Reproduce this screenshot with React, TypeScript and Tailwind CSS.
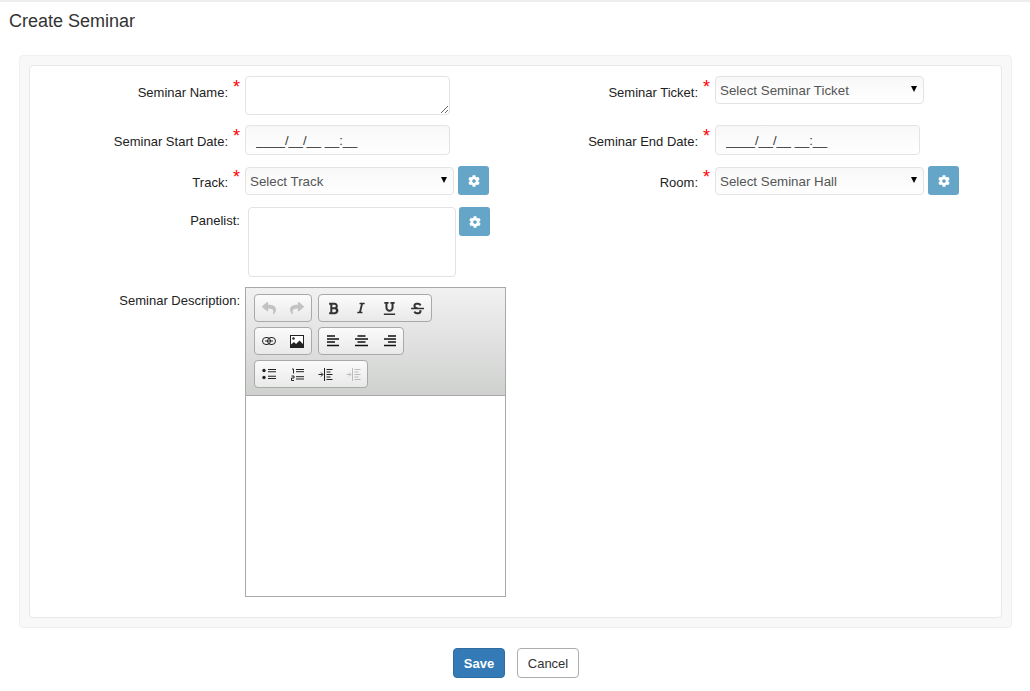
import type { ReactNode } from 'react';
import {
  FaBold,
  FaCog,
  FaItalic,
  FaReply,
  FaShare,
  FaStrikethrough,
  FaUnderline,
} from 'react-icons/fa';

const inputClass =
  'h-full rounded-[4px] border border-[#e3e3e3] bg-gradient-to-b from-[#f8f8f8] to-white text-[#333] outline-none';

function Label({ text }: { text: string }) {
  return (
    <>
      <label className="w-[198px] shrink-0 pt-[8px] text-right text-[13px] leading-[18px] text-[#222]">{text}</label>
      <span className="ml-[5px] mt-[1px] w-[12px] shrink-0 self-start text-[18px] leading-[20px] text-[#f00]">*</span>
    </>
  );
}

function GearButton() {
  return (
    <button className="flex h-[29px] w-[31px] shrink-0 items-center justify-center rounded-[3px] bg-[#65a6c8] text-white">
      <FaCog size={12} />
    </button>
  );
}

function SelectBox({ placeholder }: { placeholder: string }) {
  return (
    <div className="relative mt-px h-[28px] w-[209px]">
      <select className={`${inputClass} w-full appearance-none pl-[4px] pt-px text-[13.33px] text-[#555]`}>
        <option>{placeholder}</option>
      </select>
      <span className="absolute right-[7px] top-[10px] h-0 w-0 border-x-[3px] border-t-[6px] border-x-transparent border-t-black" />
    </div>
  );
}

function MaskInput() {
  return <input readOnly value="____/__/__ __:__" className={`${inputClass} w-[205px] pl-[10px] text-[13px]`} />;
}

function Group({ children }: { children: ReactNode }) {
  return <div className="flex rounded-[4px] border border-[#a9a9a9] bg-gradient-to-b from-[#fbfbfb] to-[#e9e9e9]">{children}</div>;
}

function Tool({ children, muted }: { children: ReactNode; muted?: boolean }) {
  return (
    <span className={`flex h-[26px] w-[28px] items-center justify-center ${muted ? 'text-[#c2c2c2]' : 'text-[#333]'}`}>
      {children}
    </span>
  );
}

// sprite-style glyphs from the editor toolbar
function AlignIcon({ d }: { d: string }) {
  return (
    <svg width="13" height="12" viewBox="0 0 13 12" fill="none" stroke="#111" strokeWidth="1.5">
      <path d={d} />
    </svg>
  );
}

function LinkIcon() {
  return (
    <svg width="14" height="8" viewBox="0 0 14 8" fill="none" stroke="#222" strokeWidth="1">
      <rect x="0.5" y="0.5" width="8" height="7" rx="3.5" />
      <rect x="5.5" y="0.5" width="8" height="7" rx="3.5" />
      <path d="M3 4h8" />
    </svg>
  );
}

function ImageIcon() {
  return (
    <svg width="14" height="13" viewBox="0 0 14 13">
      <rect x="0.5" y="0.5" width="13" height="12" fill="#fff" stroke="#222" />
      <circle cx="3.5" cy="3.5" r="1.2" fill="#222" />
      <path d="M1 12V9.5l3-2.5 2 2 3.5-3.5L13 9v3z" fill="#222" />
    </svg>
  );
}

function ListUl() {
  return (
    <svg width="14" height="12" viewBox="0 0 14 12" stroke="#222" strokeWidth="1.1" fill="#222">
      <circle cx="2" cy="2.5" r="1.7" stroke="none" />
      <circle cx="2" cy="9.5" r="1.7" stroke="none" />
      <path d="M6 1.5h8M6 3.7h8M6 8.3h8M6 10.5h8" fill="none" />
    </svg>
  );
}

function ListOl() {
  return (
    <svg width="13" height="13" viewBox="0 0 13 13" stroke="#222" strokeWidth="1" fill="none">
      <path d="M1 1h1.5v4.5M.5 8h2.5v2H.5v2.5H3" />
      <path d="M5 1.5h8M5 3.7h8M5 8.7h8M5 11h8" />
    </svg>
  );
}

function Indent({ muted }: { muted?: boolean }) {
  return (
    <svg width="15" height="13" viewBox="0 0 15 13" fill="none" stroke={muted ? '#bbb' : '#222'} strokeWidth="1">
      <path d="M6.5 0v13M8.5 1.5h6M8.5 4h4M8.5 6.5h6M8.5 9h4M8.5 11.5h6M.5 6.5h4M3 4.5l2 2-2 2" />
    </svg>
  );
}

export default function App() {
  return (
    <div className="min-h-[691px] border-t-2 border-[#eeeeee] bg-white font-['Liberation_Sans',Arial,sans-serif]">
      <h1 className="pl-[9px] pt-[9px] text-[18px] leading-[20px] text-[#333]">Create Seminar</h1>

      <div className="ml-[19px] mr-[18px] mt-[24px] rounded-[4px] border border-[#f0f0f0] bg-[#f8f8f8] p-[9px]">
        <div className="flex rounded-[4px] border border-[#e8e8e8] bg-white pb-[20px] pt-[10px]">
          {/* Left column */}
          <div className="w-[470px] shrink-0">
            <div className="flex h-[39px]">
              <Label text="Seminar Name:" />
              <textarea className="h-full w-[205px] rounded-[4px] border border-[#e3e3e3] bg-white outline-none" />
            </div>
            <div className="mt-[10px] flex h-[30px]">
              <Label text="Seminar Start Date:" />
              <MaskInput />
            </div>
            <div className="mt-[11px] flex h-[29px]">
              <Label text="Track:" />
              <SelectBox placeholder="Select Track" />
              <div className="ml-[4px]">
                <GearButton />
              </div>
            </div>
            <div className="mt-[12px] flex h-[70px]">
              <label className="w-[210px] shrink-0 pt-[5px] text-right text-[13px] leading-[18px] text-[#222]">Panelist:</label>
              <div className="ml-[8px] h-full w-[208px] rounded-[4px] border border-[#e3e3e3] bg-white" />
              <div className="ml-[3px]">
                <GearButton />
              </div>
            </div>
            <div className="mt-[10px] flex">
              <label className="w-[210px] shrink-0 pt-[5px] text-right text-[13px] leading-[18px] text-[#222]">Seminar Description:</label>
              <div className="ml-[5px] h-[310px] w-[261px] shrink-0 border border-[#a9a9a9] bg-white">
                <div className="flex h-[108px] flex-col gap-[5px] border-b border-[#a9a9a9] bg-gradient-to-b from-[#f1f1f1] to-[#cfd1cf] pl-[8px] pt-[6px]">
                  <div className="flex gap-[6px]">
                    <Group>
                      <Tool muted><FaReply size={14} /></Tool>
                      <Tool muted><FaShare size={14} /></Tool>
                    </Group>
                    <Group>
                      <Tool><FaBold size={13} /></Tool>
                      <Tool><FaItalic size={12} /></Tool>
                      <Tool><FaUnderline size={13} /></Tool>
                      <Tool><FaStrikethrough size={13} /></Tool>
                    </Group>
                  </div>
                  <div className="flex gap-[6px]">
                    <Group>
                      <Tool><LinkIcon /></Tool>
                      <Tool><ImageIcon /></Tool>
                    </Group>
                    <Group>
                      <Tool><AlignIcon d="M0 1h8M0 4h12M0 7h8M0 10.5h12" /></Tool>
                      <Tool><AlignIcon d="M2.5 1h8M0 4h13M2.5 7h8M0 10.5h13" /></Tool>
                      <Tool><AlignIcon d="M5 1h8M1 4h12M5 7h8M1 10.5h12" /></Tool>
                    </Group>
                  </div>
                  <div className="flex">
                    <Group>
                      <Tool><ListUl /></Tool>
                      <Tool><ListOl /></Tool>
                      <Tool><Indent /></Tool>
                      <Tool muted><Indent muted /></Tool>
                    </Group>
                  </div>
                </div>
              </div>
            </div>
          </div>

          {/* Right column */}
          <div className="w-[470px] shrink-0">
            <div className="flex h-[39px]">
              <Label text="Seminar Ticket:" />
              <div className="-mt-px">
                <SelectBox placeholder="Select Seminar Ticket" />
              </div>
            </div>
            <div className="mt-[10px] flex h-[30px]">
              <Label text="Seminar End Date:" />
              <MaskInput />
            </div>
            <div className="mt-[11px] flex h-[29px]">
              <Label text="Room:" />
              <SelectBox placeholder="Select Seminar Hall" />
              <div className="ml-[4px]">
                <GearButton />
              </div>
            </div>
          </div>
        </div>
      </div>

      <div className="mt-[20px] flex justify-center gap-[12px] pl-[2px]">
        <button className="h-[30px] w-[52px] rounded-[4px] border border-[#2e6da4] bg-[#337ab7] pt-[2px] text-[13px] font-bold text-white">Save</button>
        <button className="h-[30px] w-[62px] rounded-[4px] border border-[#adadad] bg-white pt-[2px] text-[13px] text-[#333]">Cancel</button>
      </div>
    </div>
  );
}
